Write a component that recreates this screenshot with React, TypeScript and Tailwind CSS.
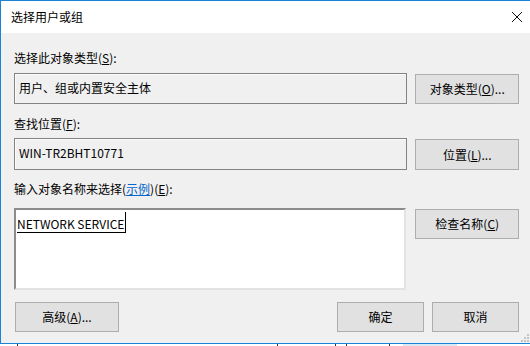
export default function App() {
  const font = { fontFamily: '"Noto Sans CJK SC", "Liberation Sans", sans-serif' }
  const btn =
    "flex items-center justify-center bg-[#e1e1e1] border border-[#adadad] text-[12px] text-black leading-none"

  return (
    <div className="relative w-[530px] h-[346px] overflow-hidden bg-white" style={font}>
      {/* dialog window */}
      <div className="flex flex-col w-[540px] h-[344px] border-l border-t border-b border-[#1883d7] bg-[#f0f0f0]">
        {/* title bar */}
        <div className="flex items-center justify-between h-[32px] bg-white pl-[10px] pr-[17px] shrink-0">
          <span className="text-[12px] text-black">选择用户或组</span>
          <svg width="12" height="12" viewBox="0 0 12 12">
            <path d="M1 1 L11 11 M11 1 L1 11" stroke="#111" strokeWidth="1" />
          </svg>
        </div>

        {/* body */}
        <div className="flex flex-col pl-[13px] pr-[21px] pt-[16px] text-[12px] text-black">
          <div className="h-[18px] leading-[18px]">
            选择此对象类型(<span className="underline">S</span>):
          </div>
          <div className="flex gap-[8px] mt-[6px]">
            <div className="w-[395px] h-[31px] border border-[#838383] bg-[#f0f0f0] flex items-center pl-[4px] pb-[2px] shadow-[inset_1px_1px_0_#fbfbfb]">
              用户、组或内置安全主体
            </div>
            <div className={`${btn} w-[104px] h-[30px] mt-[1px]`}>
              对象类型(<span className="underline">O</span>)...
            </div>
          </div>

          <div className="h-[18px] leading-[18px] mt-[11px]">
            查找位置(<span className="underline">F</span>):
          </div>
          <div className="flex gap-[8px] mt-[5px]">
            <div className="w-[395px] h-[32px] border border-[#838383] bg-[#f0f0f0] flex items-center pl-[4px] pb-[2px] shadow-[inset_1px_1px_0_#fbfbfb]">
              WIN-TR2BHT10771
            </div>
            <div className={`${btn} w-[104px] h-[31px] mt-[1px]`}>
              位置(<span className="underline">L</span>)...
            </div>
          </div>

          <div className="h-[18px] leading-[18px] mt-[10px]">
            输入对象名称来选择(<span className="text-[#0066cc] underline">示例</span>)(
            <span className="underline">E</span>):
          </div>
          <div className="flex gap-[9px] mt-[10px]">
            <div className="w-[394px] h-[82px] bg-white border-2 border-t-[#8c8c8c] border-l-[#8c8c8c] border-r-[#e3e3e3] border-b-[#e3e3e3] pt-[2px] pl-[1px]">
              <span className="inline-flex items-end leading-[16px] border-b border-black">
                NETWORK SERVICE
                <span className="inline-block w-px h-[20px] bg-black ml-[1px]" />
              </span>
            </div>
            <div className={`${btn} w-[104px] h-[30px] mt-[1px]`}>
              检查名称(<span className="underline">C</span>)
            </div>
          </div>

          <div className="flex mt-[12px]">
            <div className={`${btn} w-[104px] h-[30px] ml-[1px]`}>
              高级(<span className="underline">A</span>)...
            </div>
            <div className="flex-1" />
            <div className={`${btn} w-[87px] h-[30px]`}>确定</div>
            <div className={`${btn} w-[87px] h-[30px] ml-[8px]`}>取消</div>
          </div>
        </div>
      </div>

      {/* resize grip */}
      <svg width="8" height="8" viewBox="0 0 8 8" className="absolute left-[521px] top-[334px]">
        <rect x="6" y="0" width="2" height="2" fill="#c4c4c4" />
        <rect x="3" y="3" width="2" height="2" fill="#c4c4c4" />
        <rect x="6" y="3" width="2" height="2" fill="#c4c4c4" />
        <rect x="0" y="6" width="2" height="2" fill="#c4c4c4" />
        <rect x="3" y="6" width="2" height="2" fill="#c4c4c4" />
        <rect x="6" y="6" width="2" height="2" fill="#c4c4c4" />
      </svg>

      {/* bits of the window behind */}
      <div className="absolute left-[17px] top-[344px] w-px h-[2px] bg-[#333]" />
      <div className="absolute left-[277px] top-[344px] w-px h-[2px] bg-[#333]" />
      <div className="absolute left-[335px] top-[344px] w-px h-[2px] bg-[#333]" />
      <div className="absolute left-[346px] top-[344px] w-px h-[2px] bg-[#333]" />
      <div className="absolute left-[389px] top-[344px] w-px h-[2px] bg-[#333]" />
      <div className="absolute left-[403px] top-[344px] w-[54px] h-[2px] bg-[#dbe9f5]" />
    </div>
  )
}
